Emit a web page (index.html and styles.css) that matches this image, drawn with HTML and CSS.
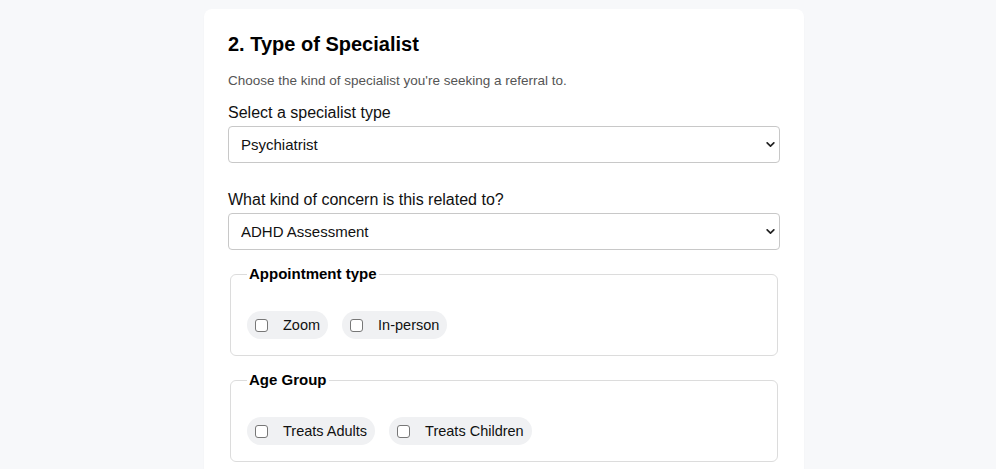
FILE: index.html
```html
<!DOCTYPE html>
<html lang="en">
<head>
<meta charset="utf-8">
<title>Type of Specialist</title>
<link rel="stylesheet" href="styles.css">
</head>
<body>
<main class="page">
  <section class="card">
    <h2 class="title">2. Type of Specialist</h2>
    <p class="hint">Choose the kind of specialist you're seeking a referral to.</p>

    <label class="field-label" for="spec">Select a specialist type</label>
    <div class="select-wrap">
      <select id="spec" class="select">
        <option>Psychiatrist</option>
      </select>
      <svg class="chevron" viewBox="0 0 10 6" width="9" height="5"><path d="M1 1l4 4 4-4" fill="none" stroke="#222" stroke-width="2" stroke-linecap="round" stroke-linejoin="round"/></svg>
    </div>

    <label class="field-label second" for="concern">What kind of concern is this related to?</label>
    <div class="select-wrap">
      <select id="concern" class="select">
        <option>ADHD Assessment</option>
      </select>
      <svg class="chevron" viewBox="0 0 10 6" width="9" height="5"><path d="M1 1l4 4 4-4" fill="none" stroke="#222" stroke-width="2" stroke-linecap="round" stroke-linejoin="round"/></svg>
    </div>

    <fieldset class="group">
      <legend class="legend">Appointment type</legend>
      <div class="chips">
        <label class="chip"><input type="checkbox" class="box"><span>Zoom</span></label>
        <label class="chip"><input type="checkbox" class="box"><span>In-person</span></label>
      </div>
    </fieldset>

    <fieldset class="group">
      <legend class="legend">Age Group</legend>
      <div class="chips">
        <label class="chip"><input type="checkbox" class="box"><span>Treats Adults</span></label>
        <label class="chip"><input type="checkbox" class="box"><span>Treats Children</span></label>
      </div>
    </fieldset>
  </section>
</main>
</body>
</html>
```
FILE: styles.css
```css
* { box-sizing: border-box; }
html, body {
  margin: 0;
  padding: 0;
  background: #f7f8fa;
  font-family: "Liberation Sans", Arial, sans-serif;
  color: #111;
}
.page {
  display: flex;
  justify-content: center;
  padding: 9px 0 0 12px;
}
.card {
  width: 600px;
  background: #fff;
  border-radius: 8px;
  padding: 24px 24px 40px;
  box-shadow: 0 1px 2px rgba(0,0,0,0.03);
}
.title {
  margin: 0;
  font-size: 20px;
  line-height: 23px;
  font-weight: bold;
  color: #000;
}
.hint {
  margin: 17px 0 0;
  font-size: 13.5px;
  line-height: 15px;
  color: #555;
}
.field-label {
  display: block;
  margin-top: 16px;
  font-size: 16px;
  line-height: 18px;
  color: #111;
}
.field-label.second { margin-top: 28px; }
.select-wrap {
  position: relative;
  margin-top: 4px;
}
.select {
  display: block;
  width: 100%;
  height: 37px;
  -webkit-appearance: none;
  appearance: none;
  border: 1px solid #c8c8c8;
  border-radius: 4px;
  background: #fff;
  padding: 0 12px;
  font-family: "Liberation Sans", Arial, sans-serif;
  font-size: 15px;
  color: #111;
}
.chevron {
  position: absolute;
  right: 5px;
  top: 16px;
}
.group {
  margin: 15px 2px 0;
  border: 1px solid #dcdcdc;
  border-radius: 6px;
  padding: 0 16px 16px;
}
.legend {
  padding: 0 2px;
  font-size: 15px;
  line-height: 18px;
  font-weight: bold;
  color: #000;
}
.chips {
  display: flex;
  gap: 14px;
  margin-top: 28px;
}
.chip {
  display: flex;
  align-items: center;
  height: 28px;
  padding: 0 8px;
  border-radius: 14px;
  background: #f0f1f3;
  font-size: 14.5px;
  color: #111;
  gap: 15px;
}
.box {
  -webkit-appearance: none;
  appearance: none;
  margin: 0;
  width: 13px;
  height: 13px;
  border: 1px solid #777;
  border-radius: 3px;
  background: #fff;
}
```
